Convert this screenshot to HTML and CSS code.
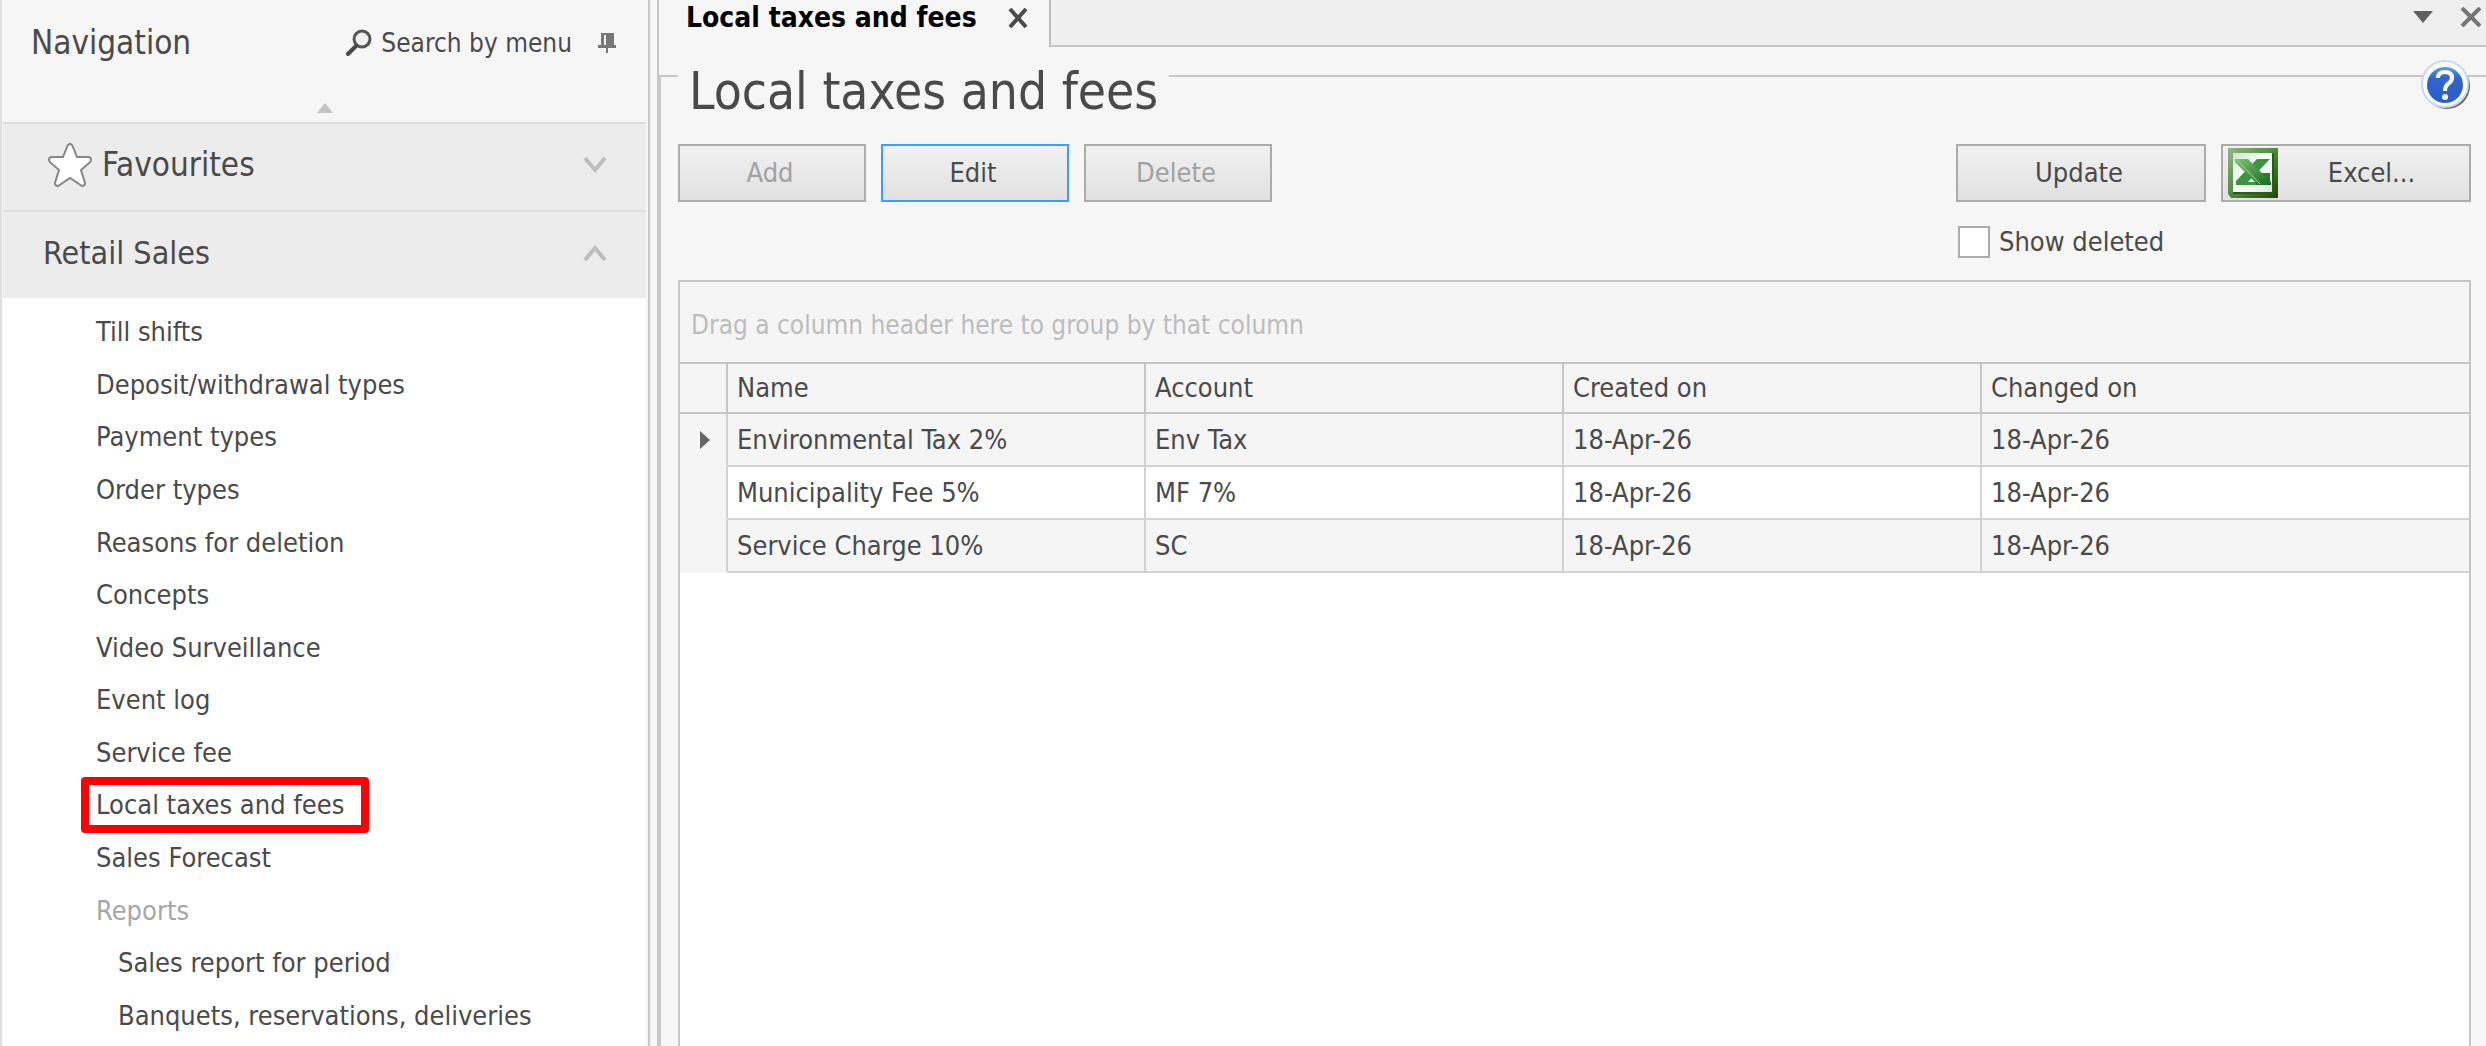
FILE: index.html
```
<!DOCTYPE html>
<html lang="en">

<head>
  <meta charset="utf-8">
  <title>Local taxes and fees</title>
  <link rel="stylesheet" href="styles.css">
</head>

<body>
  <div class="window">
    <aside class="sidebar">
      <div class="sidebar-head">
        <span class="sidebar-title">Navigation</span>
        <button class="search" type="button">
          <svg width="28" height="28" viewBox="0 0 28 28">
            <circle cx="17" cy="10" r="8" fill="#f0f0f3" stroke="#555" stroke-width="3" />
            <path d="M11 17L3 25" stroke="#484848" stroke-width="4" stroke-linecap="round" />
          </svg>
          Search by menu
        </button>
        <button class="pin" type="button" aria-label="Pin panel">
          <svg width="18" height="22" viewBox="0 0 18 22">
            <path d="M3 1h13v12h2v3h-8v5h-2v-5H0v-3h3z" fill="#777" />
            <path d="M6 3h2v10h-2z" fill="#f6f6f6" />
          </svg>
        </button>
      </div>
      <button class="scroll-up" type="button" aria-label="Scroll up">
        <svg width="16" height="10" viewBox="0 0 16 10">
          <path d="M8 0L16 10H0z" fill="#c4c4c4" />
        </svg>
      </button>

      <button class="section favourites" type="button">
        <svg width="44" height="44" viewBox="0 0 44 44">
          <path d="M22 1Q24 1 25 4L29 14H40Q43 14 43 17Q43 19 41 20L33 27L37 40Q37 43 34 43L22 35L10 43Q7 43 7 40L11 27L3 20Q1 19 1 17Q1 14 4 14H15L19 4Q20 1 22 1Z" fill="#fff" stroke="#868686" stroke-width="2" />
        </svg>
        <span>Favourites</span>
        <svg class="chevron" width="24" height="20" viewBox="0 0 24 20">
          <path d="M2 3L12 15L22 3" fill="none" stroke="#bdbdbd" stroke-width="4" />
        </svg>
      </button>
      <button class="section" type="button">
        <span>Retail Sales</span>
        <svg class="chevron" width="24" height="20" viewBox="0 0 24 20">
          <path d="M2 17L12 5L22 17" fill="none" stroke="#bdbdbd" stroke-width="4" />
        </svg>
      </button>

      <ul class="menu">
        <li><a href="#">Till shifts</a></li>
        <li><a href="#">Deposit/withdrawal types</a></li>
        <li><a href="#">Payment types</a></li>
        <li><a href="#">Order types</a></li>
        <li><a href="#">Reasons for deletion</a></li>
        <li><a href="#">Concepts</a></li>
        <li><a href="#">Video Surveillance</a></li>
        <li><a href="#">Event log</a></li>
        <li><a href="#">Service fee</a></li>
        <li><a class="marked" href="#">Local taxes and fees</a></li>
        <li><a href="#">Sales Forecast</a></li>
        <li class="group-label">Reports</li>
        <li class="sub"><a href="#">Sales report for period</a></li>
        <li class="sub"><a href="#">Banquets, reservations, deliveries</a></li>
      </ul>
    </aside>

    <main class="document">
      <div class="tabs">
        <div class="tab">
          <span>Local taxes and fees</span>
          <button type="button" aria-label="Close tab">
            <svg width="22" height="20" viewBox="0 0 22 20">
              <path d="M3 1L19 19M19 1L3 19" stroke="#4a4a4a" stroke-width="4" />
            </svg>
          </button>
        </div>
        <div class="tab-tools">
          <button type="button" aria-label="Tab list">
            <svg width="20" height="12" viewBox="0 0 20 12">
              <path d="M0 0H20L10 12z" fill="#606060" />
            </svg>
          </button>
          <button type="button" aria-label="Close">
            <svg width="22" height="20" viewBox="0 0 22 20">
              <path d="M2 1L20 19M20 1L2 19" stroke="#757575" stroke-width="4" />
            </svg>
          </button>
        </div>
      </div>

      <div class="panel">
        <div class="panel-head">
          <h1>Local taxes and fees</h1>
          <button class="help" type="button" aria-label="Help">
            <svg width="50" height="50" viewBox="0 0 50 50">
              <defs>
                <linearGradient id="helpBlue" x1="0" y1="0" x2="0" y2="1">
                  <stop offset="0" stop-color="#5b9ee8" />
                  <stop offset="0.3" stop-color="#2f66cc" />
                  <stop offset="1" stop-color="#2c5cc8" />
                </linearGradient>
              </defs>
              <circle cx="26" cy="26" r="23" fill="#666" />
              <circle cx="24" cy="24" r="23" fill="#fff" stroke="#c9d8f4" stroke-width="2" />
              <circle cx="24" cy="25" r="18" fill="url(#helpBlue)" />
              <path d="M17 18Q17 12 24 12Q31 12 31 18Q31 21 27 24Q24 26 24 31" fill="none" stroke="#fff" stroke-width="4" />
              <circle cx="24" cy="37" r="3" fill="#fff" />
            </svg>
          </button>
        </div>

        <div class="toolbar">
          <div class="actions">
            <button class="btn" type="button" disabled>Add</button>
            <button class="btn current" type="button">Edit</button>
            <button class="btn" type="button" disabled>Delete</button>
          </div>
          <div class="actions-right">
            <button class="btn" type="button">Update</button>
            <button class="btn excel" type="button">
              <svg width="50" height="50" viewBox="0 0 50 50">
                <defs>
                  <linearGradient id="xlFrame" x1="0" y1="0" x2="1" y2="1">
                    <stop offset="0" stop-color="#8fb886" />
                    <stop offset="0.5" stop-color="#4f8a3c" />
                    <stop offset="1" stop-color="#1c4708" />
                  </linearGradient>
                  <linearGradient id="xlPage" x1="0" y1="0" x2="1" y2="1">
                    <stop offset="0" stop-color="#cfe3cf" />
                    <stop offset="0.5" stop-color="#fff" />
                    <stop offset="1" stop-color="#dcead8" />
                  </linearGradient>
                  <linearGradient id="xlCross" x1="0" y1="0" x2="1" y2="1">
                    <stop offset="0" stop-color="#7fc274" />
                    <stop offset="1" stop-color="#156a1c" />
                  </linearGradient>
                </defs>
                <path d="M0 0H50V50H3L0 46z" fill="url(#xlFrame)" />
                <path d="M45 5V45H5" fill="none" stroke="#2c5a1a" stroke-width="2" />
                <rect x="5" y="5" width="39" height="39" fill="url(#xlPage)" />
                <path d="M29 11H42L20 34H34V37H8V33z" fill="#3c9440" />
                <path d="M30 25H42V37H28z" fill="#2a7a2e" />
                <path d="M7 11H20L43 34V37H30L7 14z" fill="url(#xlCross)" />
                <path d="M9 12L32 36" stroke="#a2d79a" stroke-width="1" />
              </svg>
              <span>Excel...</span>
            </button>
            <label class="check"><input type="checkbox">Show deleted</label>
          </div>
        </div>

        <div class="grid">
          <div class="group-by">Drag a column header here to group by that column</div>
          <table>
            <colgroup>
              <col class="col-mark">
              <col class="col-data">
              <col class="col-data">
              <col class="col-data">
              <col>
            </colgroup>
            <thead>
              <tr>
                <th></th>
                <th>Name</th>
                <th>Account</th>
                <th>Created on</th>
                <th>Changed on</th>
              </tr>
            </thead>
            <tbody>
              <tr>
                <td class="mark">
                  <svg width="10" height="18" viewBox="0 0 10 18">
                    <path d="M0 0L10 9L0 18z" fill="#666" />
                  </svg>
                </td>
                <td>Environmental Tax 2%</td>
                <td>Env Tax</td>
                <td>18-Apr-26</td>
                <td>18-Apr-26</td>
              </tr>
              <tr>
                <td class="mark"></td>
                <td>Municipality Fee 5%</td>
                <td>MF 7%</td>
                <td>18-Apr-26</td>
                <td>18-Apr-26</td>
              </tr>
              <tr>
                <td class="mark"></td>
                <td>Service Charge 10%</td>
                <td>SC</td>
                <td>18-Apr-26</td>
                <td>18-Apr-26</td>
              </tr>
            </tbody>
          </table>
        </div>
      </div>
    </main>
  </div>
</body>

</html>
```
FILE: styles.css
```
* {
  margin: 0;
  padding: 0;
  box-sizing: border-box;
}

body {
  font-family: "DejaVu Sans Condensed", "DejaVu Sans", Tahoma, sans-serif;
  font-size: 27px;
  line-height: 36px;
  color: #4a4a4a;
  background-color: #f6f6f6;
}

button {
  font: inherit;
  color: inherit;
  background: none;
  border: none;
  cursor: pointer;
}

svg {
  display: block;
}

a {
  color: inherit;
  text-decoration: none;
}

.window {
  display: flex;
  gap: 7px;
  min-height: 100vh;
}

/* left navigation */
.sidebar {
  flex: 0 0 650px;
  display: flex;
  flex-direction: column;
  padding: 0 2px 0 1px;
  border-left: 2px solid #e0e0e0;
  border-right: 2px solid #c8c8c8;
}

.sidebar-head {
  display: flex;
  align-items: center;
  height: 86px;
  padding: 0 30px 0 28px;
}

.sidebar-title {
  font-size: 33px;
  margin-right: auto;
}

.search {
  display: flex;
  align-items: center;
  gap: 8px;
  font-size: 26px;
}

.pin {
  margin-left: 26px;
}

.scroll-up {
  display: flex;
  justify-content: center;
  height: 36px;
  padding-top: 17px;
}

.section {
  display: flex;
  align-items: center;
  gap: 10px;
  height: 88px;
  padding: 0 39px 4px 40px;
  font-size: 32px;
  background-color: #ececec;
  border-top: 2px solid #dedede;
}

.favourites {
  padding-left: 45px;
  font-size: 33px;
}

.chevron {
  margin-left: auto;
}

.menu {
  flex: 1;
  display: grid;
  grid-auto-rows: 1fr;
  padding: 8px 0 4px 93px;
  list-style: none;
  background-color: #fff;
}

.menu li {
  display: flex;
  align-items: center;
}

.menu .sub {
  padding-left: 22px;
}

.group-label {
  color: #a6a6a6;
}

.marked {
  position: relative;
}

.marked::after {
  content: "";
  position: absolute;
  inset: -10px -25px -10px -15px;
  border: 8px solid #ff0000;
  border-radius: 4px;
}

/* document area */
.document {
  flex: 1;
  display: flex;
  flex-direction: column;
  border-left: 2px solid #c8c8c8;
}

.tabs {
  display: flex;
  height: 47px;
}

.tab {
  display: flex;
  align-items: center;
  gap: 30px;
  padding: 0 20px 12px 27px;
  font-size: 28px;
  font-weight: bold;
  color: #000;
  border-right: 2px solid #c0c0c0;
}

.tab-tools {
  flex: 1;
  display: flex;
  align-items: center;
  justify-content: flex-end;
  gap: 27px;
  padding: 0 4px 12px 0;
  background-color: #efefef;
  border-bottom: 2px solid #c4c4c4;
}

.panel {
  flex: 1;
  display: flex;
  flex-direction: column;
  margin-top: 28px;
  padding: 0 15px 0 17px;
  border-top: 2px solid #c8c8c8;
  border-left: 2px solid #c8c8c8;
}

/* the heading sits over the panel's top line */
.panel-head {
  display: flex;
  justify-content: space-between;
  align-items: flex-start;
  margin-top: -17px;
}

h1 {
  padding: 0 11px;
  font-size: 51px;
  font-weight: normal;
  line-height: 64px;
  background-color: #f6f6f6;
}

.toolbar {
  display: flex;
  justify-content: space-between;
  margin: 20px 0;
}

.actions {
  display: flex;
  align-items: flex-start;
  gap: 15px;
}

.actions-right {
  display: grid;
  grid-template-columns: 250px 250px;
  gap: 22px 15px;
}

.btn {
  min-width: 188px;
  height: 58px;
  padding-right: 4px;
  background: linear-gradient(#f1f1f1, #e1e1e1);
  border: 2px solid #acacac;
}

.btn:disabled {
  color: #a2a2a2;
  cursor: default;
}

.btn.current {
  border-color: #3c9dff;
}

.excel {
  display: flex;
  align-items: center;
  padding-left: 5px;
}

.excel span {
  flex: 1;
  text-align: center;
}

.check {
  display: flex;
  align-items: center;
  gap: 9px;
  padding-left: 2px;
}

.check input {
  appearance: none;
  width: 32px;
  height: 32px;
  background-color: #fff;
  border: 2px solid #acacac;
}

/* data grid */
.grid {
  flex: 1;
  background-color: #fff;
  border: 2px solid #c6c6c6;
  border-bottom: none;
}

.group-by {
  padding: 25px 11px 19px;
  font-size: 26px;
  color: #bcbcbe;
  background-color: #f5f5f5;
  border-bottom: 2px solid #c6c6c6;
}

table {
  width: 100%;
  table-layout: fixed;
  border-spacing: 0;
}

.col-mark {
  width: 48px;
}

.col-data {
  width: 418px;
}

th,
td {
  height: 53px;
  padding: 0 9px;
  text-align: left;
  border-right: 2px solid #d2d2d2;
  border-bottom: 2px solid #d2d2d2;
}

th {
  height: 50px;
  font-weight: normal;
  background-color: #f5f5f5;
  border-color: #c6c6c6;
}

tbody tr:nth-child(odd) td {
  background-color: #f5f5f5;
}

tbody .mark {
  padding-left: 20px;
  background-color: #f5f5f5;
  border-bottom-color: #f5f5f5;
}

th:last-child,
td:last-child {
  border-right: none;
}
```
